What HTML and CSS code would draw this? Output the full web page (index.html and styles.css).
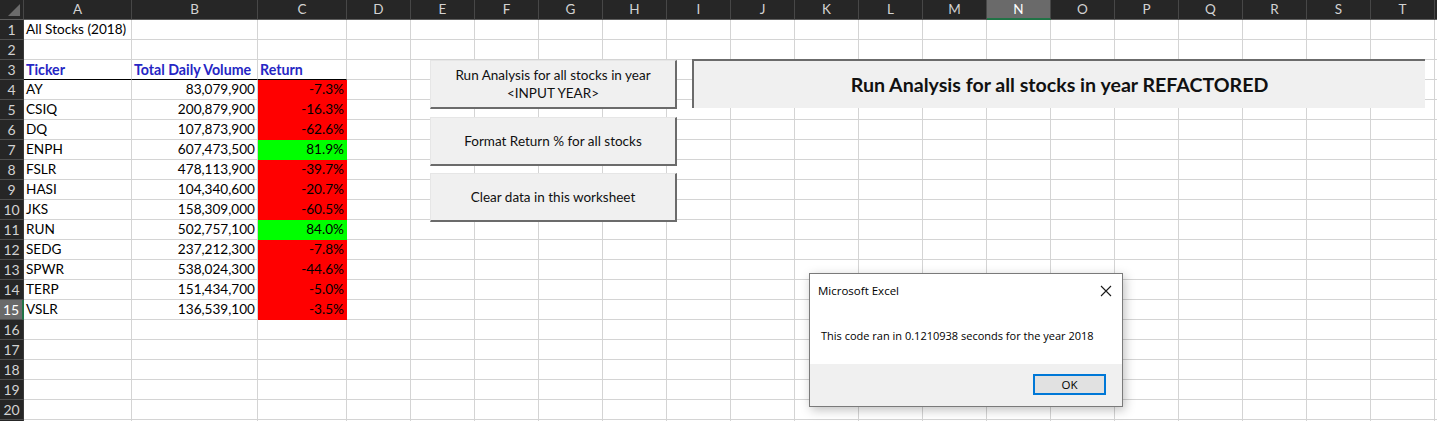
FILE: index.html
```html
<!DOCTYPE html>
<html>
<head>
<meta charset="utf-8">
<title>All Stocks (2018)</title>
<link rel="stylesheet" href="styles.css">
</head>
<body>
<div class="canvas">
  <div class="sheet">
    <div class="row hdr">
      <div class="corner"><span class="tri"></span></div>
      <div class="ch">A</div><div class="ch">B</div><div class="ch">C</div>
      <div class="ch-rest">
        <div class="ch">D</div><div class="ch">E</div><div class="ch">F</div><div class="ch">G</div><div class="ch">H</div><div class="ch">I</div><div class="ch">J</div><div class="ch">K</div><div class="ch">L</div><div class="ch">M</div><div class="ch sel">N</div><div class="ch">O</div><div class="ch">P</div><div class="ch">Q</div><div class="ch">R</div><div class="ch">S</div><div class="ch">T</div><div class="ch"></div>
      </div>
    </div>
    <div class="row"><div class="rh">1</div><div class="c">All Stocks (2018)</div><div class="c"></div><div class="c"></div><div class="rest"></div></div>
    <div class="row"><div class="rh">2</div><div class="c"></div><div class="c"></div><div class="c"></div><div class="rest"></div></div>
    <div class="row"><div class="rh">3</div><div class="c th">Ticker</div><div class="c th">Total Daily Volume</div><div class="c th">Return</div><div class="rest"></div></div>
    <div class="row"><div class="rh">4</div><div class="c">AY</div><div class="c num">83,079,900</div><div class="c num neg">-7.3%</div><div class="rest"></div></div>
    <div class="row"><div class="rh">5</div><div class="c">CSIQ</div><div class="c num">200,879,900</div><div class="c num neg">-16.3%</div><div class="rest"></div></div>
    <div class="row"><div class="rh">6</div><div class="c">DQ</div><div class="c num">107,873,900</div><div class="c num neg">-62.6%</div><div class="rest"></div></div>
    <div class="row"><div class="rh">7</div><div class="c">ENPH</div><div class="c num">607,473,500</div><div class="c num pos">81.9%</div><div class="rest"></div></div>
    <div class="row"><div class="rh">8</div><div class="c">FSLR</div><div class="c num">478,113,900</div><div class="c num neg">-39.7%</div><div class="rest"></div></div>
    <div class="row"><div class="rh">9</div><div class="c">HASI</div><div class="c num">104,340,600</div><div class="c num neg">-20.7%</div><div class="rest"></div></div>
    <div class="row"><div class="rh">10</div><div class="c">JKS</div><div class="c num">158,309,000</div><div class="c num neg">-60.5%</div><div class="rest"></div></div>
    <div class="row"><div class="rh">11</div><div class="c">RUN</div><div class="c num">502,757,100</div><div class="c num pos">84.0%</div><div class="rest"></div></div>
    <div class="row"><div class="rh">12</div><div class="c">SEDG</div><div class="c num">237,212,300</div><div class="c num neg">-7.8%</div><div class="rest"></div></div>
    <div class="row"><div class="rh">13</div><div class="c">SPWR</div><div class="c num">538,024,300</div><div class="c num neg">-44.6%</div><div class="rest"></div></div>
    <div class="row"><div class="rh">14</div><div class="c">TERP</div><div class="c num">151,434,700</div><div class="c num neg">-5.0%</div><div class="rest"></div></div>
    <div class="row"><div class="rh rsel">15</div><div class="c">VSLR</div><div class="c num">136,539,100</div><div class="c num neg">-3.5%</div><div class="rest"></div></div>
    <div class="row"><div class="rh">16</div><div class="c"></div><div class="c"></div><div class="c"></div><div class="rest"></div></div>
    <div class="row"><div class="rh">17</div><div class="c"></div><div class="c"></div><div class="c"></div><div class="rest"></div></div>
    <div class="row"><div class="rh">18</div><div class="c"></div><div class="c"></div><div class="c"></div><div class="rest"></div></div>
    <div class="row"><div class="rh">19</div><div class="c"></div><div class="c"></div><div class="c"></div><div class="rest"></div></div>
    <div class="row"><div class="rh">20</div><div class="c"></div><div class="c"></div><div class="c"></div><div class="rest"></div></div>
    <div class="row"><div class="rh"></div><div class="c"></div><div class="c"></div><div class="c"></div><div class="rest"></div></div>
  </div>

  <div class="sbtn btn-run">Run Analysis for all stocks in year<br>&lt;INPUT YEAR&gt;</div>
  <div class="sbtn btn-format">Format Return % for all stocks</div>
  <div class="sbtn btn-clear">Clear data in this worksheet</div>
  <div class="sbtn-in btn-refactor">Run Analysis for all stocks in year REFACTORED</div>

  <div class="dialog">
    <div class="dlg-title">
      <span>Microsoft Excel</span>
      <svg class="dlg-x" width="12" height="12" viewBox="0 0 12 12"><path d="M1 1 L11 11 M11 1 L1 11" stroke="#1a1a1a" stroke-width="1.1" fill="none"/></svg>
    </div>
    <div class="dlg-body">This code ran in 0.1210938 seconds for the year 2018</div>
    <div class="dlg-foot"><div class="ok">OK</div></div>
  </div>
</div>
</body>
</html>
```
FILE: styles.css
```css
html, body {
  margin: 0;
  padding: 0;
  background: #fff;
  overflow: hidden;
}
.canvas {
  position: relative;
  width: 1437px;
  height: 421px;
  overflow: hidden;
  font-family: Lato, "Liberation Sans", sans-serif;
}
.sheet {
  display: flex;
  flex-direction: column;
}
.row {
  display: grid;
  grid-template-columns: 24px 108px 126px 89px 1152px;
  height: 20px;
}
.row > div {
  box-sizing: border-box;
  height: 20px;
}
.corner {
  background: #262626;
  border-right: 1px solid #474747;
  border-bottom: 1px solid #5e5e5e;
  display: flex;
  justify-content: flex-end;
  align-items: flex-end;
  padding: 0 3px 3px 0;
}
.tri {
  width: 12px;
  height: 12px;
  background: #6b6b6b;
  clip-path: polygon(100% 0, 100% 100%, 0 100%);
}
.ch {
  background: #262626;
  color: #d2d2d2;
  font-size: 13.5px;
  line-height: 19px;
  text-align: center;
  border-right: 1px solid #474747;
  border-bottom: 1px solid #5e5e5e;
  box-sizing: border-box;
  height: 20px;
}
.ch-rest {
  display: flex;
}
.ch-rest .ch {
  width: 64px;
  flex: none;
}
.ch.sel {
  background: #6a6a6a;
  color: #fff;
  border-bottom: 2px solid #217346;
}
.rh {
  background: #262626;
  color: #d2d2d2;
  font-size: 14px;
  line-height: 19px;
  text-align: center;
  border-right: 1px solid #3a3a3a;
  border-bottom: 1px solid #4e4e4e;
}
.rh.rsel {
  background: #6a6a6a;
  color: #fff;
  border-right: 2px solid #217346;
}
.c {
  border-right: 1px solid #d4d4d4;
  border-bottom: 1px solid #d4d4d4;
  padding: 0 2px;
  font-size: 13.6px;
  line-height: 19px;
  color: #000;
  white-space: nowrap;
}
.c.th {
  font-size: 14.2px;
  font-weight: 700;
  color: #2626c4;
  border-bottom-color: #000;
}
.c.num {
  text-align: right;
}
.c.neg {
  background: #ff0000;
  border-color: #ff0000;
}
.c.pos {
  background: #00ff00;
  border-color: #00ff00;
}
.rest {
  background: repeating-linear-gradient(to right, transparent 0 63px, #d4d4d4 63px 64px);
  border-bottom: 1px solid #d4d4d4;
}

/* sheet buttons */
.sbtn, .sbtn-in {
  position: absolute;
  box-sizing: border-box;
  background: #f0f0f0;
  color: #111;
  display: flex;
  align-items: center;
  justify-content: center;
  text-align: center;
  font-size: 13.5px;
  line-height: 18px;
}
.sbtn {
  left: 430px;
  width: 247px;
  height: 49px;
  border-top: 1px solid #e6e6e6;
  border-left: 1px solid #e6e6e6;
  border-right: 2px solid #6b6b6b;
  border-bottom: 2px solid #6b6b6b;
}
.btn-run { top: 60px; }
.btn-format { top: 117px; }
.btn-clear { top: 173px; }
.sbtn-in {
  left: 692px;
  top: 59px;
  width: 733px;
  height: 49px;
  border-top: 2px solid #6b6b6b;
  border-left: 2px solid #6b6b6b;
  font-size: 19.6px;
  font-weight: 700;
  color: #111;
}

/* dialog */
.dialog {
  position: absolute;
  left: 809px;
  top: 273px;
  width: 314px;
  height: 134px;
  box-sizing: border-box;
  background: #fff;
  border: 1px solid #7a7a7a;
  box-shadow: 2px 3px 10px rgba(0,0,0,0.25);
  display: flex;
  flex-direction: column;
  font-family: "Open Sans", "Noto Sans", sans-serif;
  font-size: 11px;
  color: #000;
}
.dlg-title {
  height: 33px;
  display: flex;
  align-items: center;
  justify-content: space-between;
  padding: 0 10px 0 8px;
  font-size: 11.5px;
}
.dlg-x {
  display: block;
}
.dlg-body {
  height: 57px;
  display: flex;
  align-items: center;
  padding-left: 11px;
}
.dlg-foot {
  flex: 1;
  background: #f0f0f0;
  display: flex;
  justify-content: flex-end;
  align-items: flex-start;
  padding: 10px 16px 0 0;
}
.ok {
  box-sizing: border-box;
  width: 73px;
  height: 21px;
  border: 2px solid #0078d7;
  background: #e1e1e1;
  display: flex;
  align-items: center;
  justify-content: center;
  font-size: 11.5px;
}
```
